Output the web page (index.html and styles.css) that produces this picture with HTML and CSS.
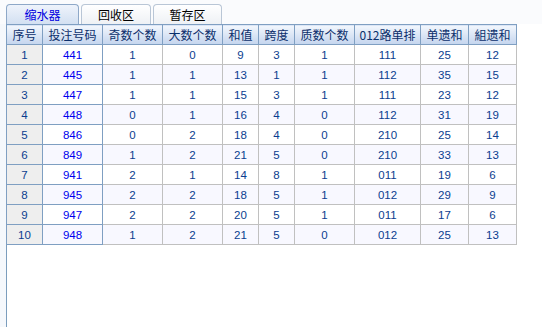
FILE: index.html
```html
<!DOCTYPE html>
<html>
<head>
<meta charset="utf-8">
<link rel="stylesheet" href="styles.css">
</head>
<body>
<div class="page">
  <div class="tabs">
    <div class="tab active">缩水器</div>
    <div class="tab">回收区</div>
    <div class="tab">暂存区</div>
  </div>
  <div class="panel">
    <table class="grid">
      <colgroup>
        <col class="c36"><col class="c60"><col class="c60"><col class="c60"><col class="c36"><col class="c36"><col class="c60"><col class="c66"><col class="c48"><col class="c48">
      </colgroup>
      <thead>
        <tr><th>序号</th><th>投注号码</th><th>奇数个数</th><th>大数个数</th><th>和值</th><th>跨度</th><th>质数个数</th><th>012路单排</th><th>单遗和</th><th>組遗和</th></tr>
      </thead>
      <tbody>
        <tr><td class="idx">1</td><td class="num">441</td><td>1</td><td>0</td><td>9</td><td>3</td><td>1</td><td>111</td><td>25</td><td>12</td></tr>
        <tr class="alt"><td class="idx">2</td><td class="num">445</td><td>1</td><td>1</td><td>13</td><td>1</td><td>1</td><td>112</td><td>35</td><td>15</td></tr>
        <tr><td class="idx">3</td><td class="num">447</td><td>1</td><td>1</td><td>15</td><td>3</td><td>1</td><td>111</td><td>23</td><td>12</td></tr>
        <tr class="alt"><td class="idx">4</td><td class="num">448</td><td>0</td><td>1</td><td>16</td><td>4</td><td>0</td><td>112</td><td>31</td><td>19</td></tr>
        <tr><td class="idx">5</td><td class="num">846</td><td>0</td><td>2</td><td>18</td><td>4</td><td>0</td><td>210</td><td>25</td><td>14</td></tr>
        <tr class="alt"><td class="idx">6</td><td class="num">849</td><td>1</td><td>2</td><td>21</td><td>5</td><td>0</td><td>210</td><td>33</td><td>13</td></tr>
        <tr><td class="idx">7</td><td class="num">941</td><td>2</td><td>1</td><td>14</td><td>8</td><td>1</td><td>011</td><td>19</td><td>6</td></tr>
        <tr class="alt"><td class="idx">8</td><td class="num">945</td><td>2</td><td>2</td><td>18</td><td>5</td><td>1</td><td>012</td><td>29</td><td>9</td></tr>
        <tr><td class="idx">9</td><td class="num">947</td><td>2</td><td>2</td><td>20</td><td>5</td><td>1</td><td>011</td><td>17</td><td>6</td></tr>
        <tr class="alt"><td class="idx">10</td><td class="num">948</td><td>1</td><td>2</td><td>21</td><td>5</td><td>0</td><td>012</td><td>25</td><td>13</td></tr>
      </tbody>
    </table>
  </div>
</div>
</body>
</html>
```

FILE: styles.css
```css
html, body {
  margin: 0;
  padding: 0;
  height: 100%;
}
body {
  background: #f5f8fc;
  font-family: "Noto Sans CJK SC", sans-serif;
  font-size: 12px;
  overflow: hidden;
}
.page {
  display: flex;
  flex-direction: column;
  height: 100%;
  padding-left: 6px;
  box-sizing: border-box;
}
.tabs {
  display: flex;
  gap: 2px;
  height: 24px;
  padding-top: 4px;
  box-sizing: border-box;
  background: #fafbfd;
  margin-left: -6px;
  padding-left: 6px;
}
.tab {
  width: 70px;
  height: 20px;
  box-sizing: border-box;
  border: 1px solid #b9c6d6;
  border-bottom: none;
  border-radius: 4px 4px 0 0;
  background: linear-gradient(#ffffff, #eef1f5);
  color: #000;
  text-align: center;
  line-height: 19px;
  font-size: 12px;
}
.tab:nth-child(3) { width: 69px; }
.tab.active {
  width: 73px;
  background: linear-gradient(#eef3fb, #d3e0f2);
  border-color: #8ea8c8;
  color: #0000e0;
}
.panel {
  flex: 1;
  background: #ffffff;
  border-left: 1px solid #7b9dbd;
}
.grid {
  border-collapse: collapse;
  table-layout: fixed;
  margin-left: -1px;
}
.c36 { width: 36px; }
.c48 { width: 48px; }
.c60 { width: 60px; }
.c66 { width: 66px; }
.grid th {
  height: 20px;
  padding: 0;
  box-sizing: border-box;
  border: 1px solid #7f9fc2;
  background: linear-gradient(#f3f7fd, #c4d5ee);
  color: #0b2f6b;
  font-weight: normal;
  font-size: 12px;
  text-align: center;
  line-height: 18px;
}
.grid td {
  height: 20px;
  padding: 0;
  box-sizing: border-box;
  border: 1px solid #c0c0c0;
  text-align: center;
  color: #0a3d8f;
  font-family: "Liberation Sans", Arial, sans-serif;
  font-size: 11.5px;
  line-height: 18px;
}
.grid tr.alt td { background: #f8f8ff; }
.grid td.idx {
  background: #eeeeee;
  border-color: #7f9fc2;
}
.grid tr.alt td.idx { background: #eeeeee; }
.grid td.num {
  color: #0000ee;
  border-color: #7f9fc2;
}
```
